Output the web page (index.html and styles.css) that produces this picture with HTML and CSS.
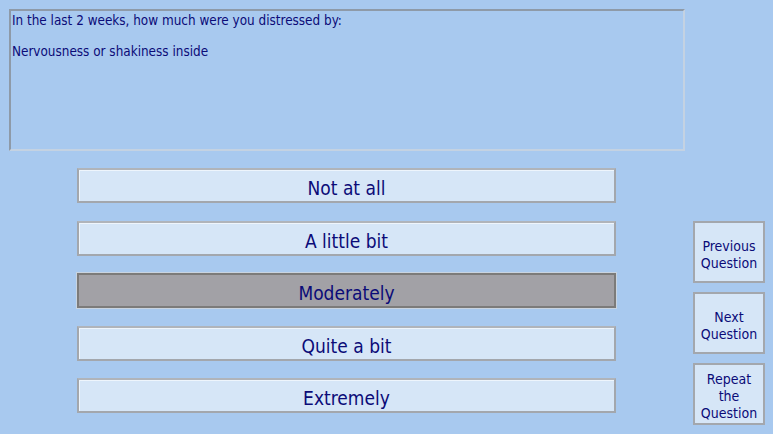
FILE: index.html
```html
<!DOCTYPE html>
<html lang="en">
  <head>
    <meta charset="UTF-8" />
    <meta name="viewport" content="width=device-width, initial-scale=1" />
    <title>Symptom questionnaire</title>
    <link rel="stylesheet" href="styles.css">
  </head>
  <body>
    <div class="page">
      <div class="question">
        <p>In the last 2 weeks, how much were you distressed by:</p>
        <p>Nervousness or shakiness inside</p>
      </div>

      <div class="lower">
        <div class="options">
          <button class="option">Not at all</button>
          <button class="option">A little bit</button>
          <button class="option selected">Moderately</button>
          <button class="option">Quite a bit</button>
          <button class="option">Extremely</button>
        </div>

        <div class="side">
          <button class="nav-btn">Previous<br>Question</button>
          <button class="nav-btn">Next<br>Question</button>
          <button class="nav-btn">Repeat<br>the<br>Question</button>
        </div>
      </div>
    </div>
  </body>
</html>
```

FILE: styles.css
```css
body {
  margin: 0;
  padding: 0;
  background: #a8c9ef;
  color: #0b0b78;
  font-family: "DejaVu Sans Condensed", "DejaVu Sans", Verdana, sans-serif;
}

.page {
  padding: 9px 0 0 9px;
}

.question {
  box-sizing: border-box;
  width: 676px;
  height: 142px;
  border-top: 2px solid #8e9aa8;
  border-left: 2px solid #8e9aa8;
  border-right: 2px solid #c4d2e2;
  border-bottom: 2px solid #c4d2e2;
  padding: 2px 1px;
  font-size: 13.4px;
}

.question p {
  margin: 0 0 15px 0;
  line-height: 16px;
}

.lower {
  display: flex;
  margin-top: 17px;
}

.options {
  display: flex;
  flex-direction: column;
  gap: 17.5px;
  margin-left: 68px;
  width: 539px;
}

button {
  font-family: inherit;
  color: #0b0b78;
  cursor: pointer;
}

.option {
  box-sizing: border-box;
  height: 35px;
  background: #d6e6f7;
  border: 2px solid #a3a7ad;
  border-top-color: #b0b4ba;
  box-shadow: inset 1px 1px 0 #eef5fc;
  font-size: 19px;
  padding: 5px 0 0 0;
}

.option.selected {
  background: #a2a1a6;
  border: 2px solid #7c7b7a;
  outline: 1px solid #c9d4e0;
  box-shadow: none;
}

.side {
  display: flex;
  flex-direction: column;
  gap: 9px;
  margin-left: 77px;
  margin-top: 53px;
  width: 72px;
}

.nav-btn {
  box-sizing: border-box;
  height: 62px;
  background: #d6e6f7;
  border: 2px solid #a3a7ad;
  font-size: 14px;
  line-height: 17px;
  padding: 5px 0 0 0;
}
```
